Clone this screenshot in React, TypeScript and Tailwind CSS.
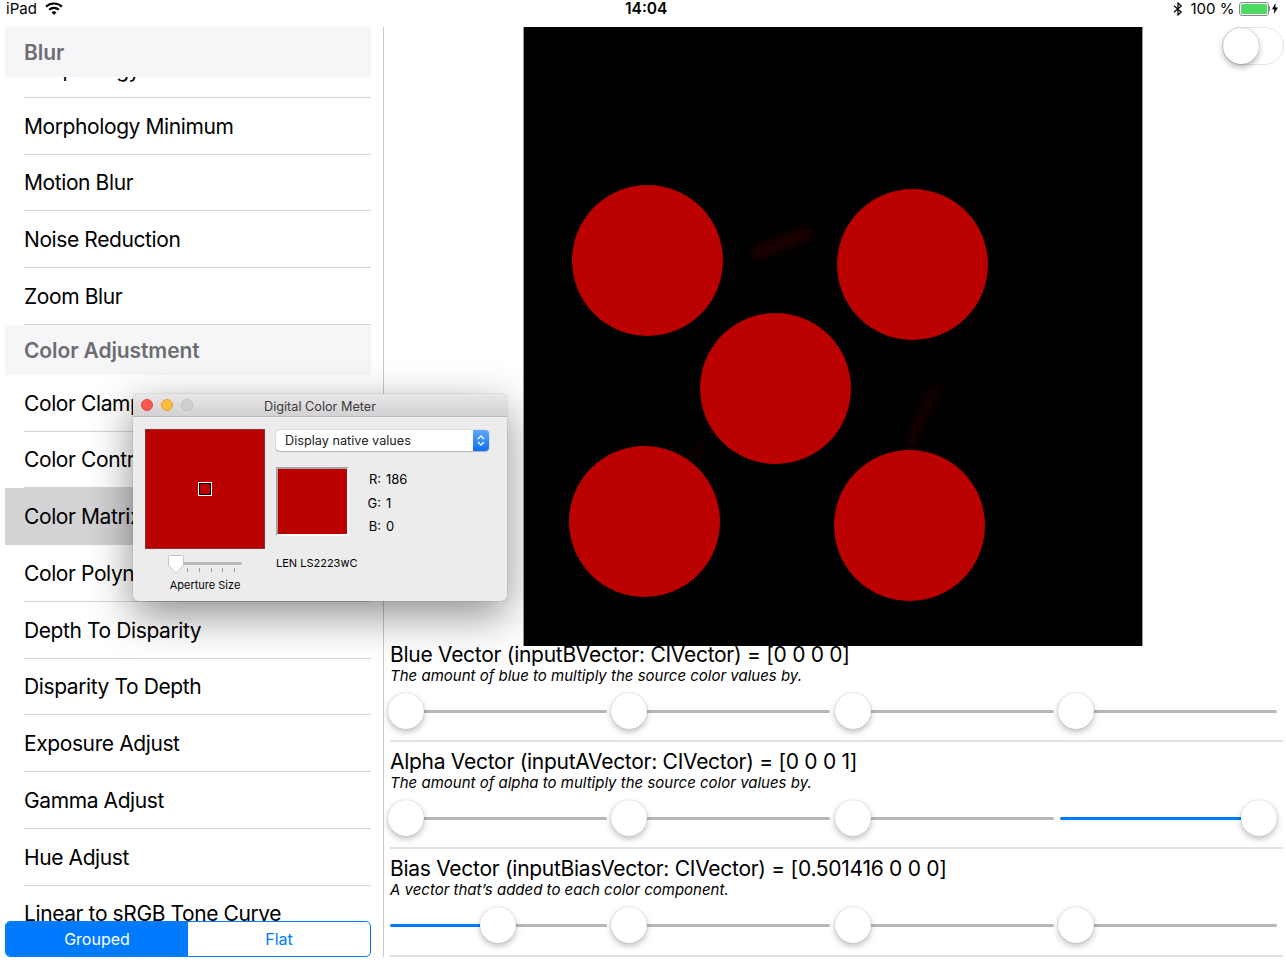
const font = "font-['Inter','Liberation_Sans',sans-serif]";

function Wifi() {
  return (
    <svg width="18" height="13" viewBox="0 0 18 13" className="fill-black">
      <path d="M9 .4c3.400 0 6.400 1.300 8.700 3.400l-1.500 1.700A10 10 0 0 0 9 2.600 10 10 0 0 0 1.800 5.500L.3 3.800A12.700 12.700 0 0 1 9 .4z" />
      <path d="M9 4.700c2.200 0 4.100.8 5.600 2.200l-1.600 1.700A5.900 5.900 0 0 0 9 7a5.900 5.900 0 0 0-4 1.600L3.400 6.900A8.100 8.100 0 0 1 9 4.700z" />
      <path d="M9 9.300c.9 0 1.800.4 2.400.9L9 12.900l-2.400-2.700c.6-.5 1.500-.9 2.400-.9z" />
    </svg>
  );
}

function StatusBar() {
  return (
    <div className="h-[27px] shrink-0 relative flex items-start justify-between px-[6px] text-[15px] leading-[17px] text-black">
      <div className="flex items-center gap-[8px]">
        <span>iPad</span>
        <Wifi />
      </div>
      <span className="absolute left-[625px] top-0 font-semibold text-[15.5px]">14:04</span>
      <div className="flex items-center pr-[2px]">
        <svg width="10" height="14" viewBox="0 0 10 14" fill="none" stroke="black" strokeWidth="1.2" className="mr-[8px]">
          <path d="M1 3.800 8.200 10 5 13V1l3.200 3L1 10.200" />
        </svg>
        <span>100 %</span>
        <div className="ml-[4px] w-[30px] h-[14px] border border-[#888] rounded-[3px] p-[1px]">
          <div className="w-full h-full bg-[#4cd964] rounded-[1.5px]" />
        </div>
        <div className="w-[1.5px] h-[5px] bg-[#888] mr-[2px]" />
        <svg width="6" height="11" viewBox="0 0 6 11" className="fill-black">
          <path d="M3.600 0 0 6.200h2.300L1.800 11 6 4.400H3.400z" />
        </svg>
      </div>
    </div>
  );
}

function Row({ label, selected }: { label: string; selected?: boolean }) {
  return (
    <div className={`h-[56.75px] flex flex-col ${selected ? "bg-[#d3d3d5]" : ""}`}>
      <div className="flex-1 pl-[19px] pt-[1px] flex items-center text-[21px] text-black leading-none whitespace-nowrap tracking-[-0.4px]">{label}</div>
      <div className={`ml-[19px] h-px ${selected ? "bg-transparent" : "bg-[#d4d4d6]"}`} />
    </div>
  );
}

function Header({ label }: { label: string }) {
  return (
    <div className="h-[50px] bg-[#f6f6f8] pl-[19px] pt-[2px] flex items-center text-[21px] font-semibold text-[#6d6d72] tracking-[-0.1px]">{label}</div>
  );
}

function Sidebar() {
  return (
    <div className="w-[384px] shrink-0 h-full border-r border-[#c8c8cc] relative overflow-hidden">
      <div className="absolute inset-x-0 top-0 pl-[5px] pr-[12px]">
        <div className="mt-[14px]">
          <Row label="Morphology Gradient" />
          <Row label="Morphology Minimum" />
          <Row label="Motion Blur" />
          <Row label="Noise Reduction" />
          <Row label="Zoom Blur" />
          <Header label="Color Adjustment" />
          <Row label="Color Clamp" />
          <Row label="Color Controls" />
          <Row label="Color Matrix" selected />
          <Row label="Color Polynomial" />
          <Row label="Depth To Disparity" />
          <Row label="Disparity To Depth" />
          <Row label="Exposure Adjust" />
          <Row label="Gamma Adjust" />
          <Row label="Hue Adjust" />
          <Row label="Linear to sRGB Tone Curve" />
        </div>
      </div>
      <div className="absolute left-[5px] right-[12px] top-0">
        <Header label="Blur" />
      </div>
      <div className="absolute left-[5px] right-[12px] top-[894px] h-[36px] flex rounded-[5px] border border-[#007aff] bg-white text-[16px] overflow-hidden">
        <div className="w-[182px] bg-[#007aff] text-white flex items-center justify-center">Grouped</div>
        <div className="flex-1 text-[#007aff] flex items-center justify-center">Flat</div>
      </div>
    </div>
  );
}

function Slider({ value }: { value: number }) {
  const thumb = 16 + value * 183;
  return (
    <div className="relative w-[217px] h-[36px] flex items-center">
      <div className="w-full h-[3px] flex rounded-full overflow-hidden">
        <div className="bg-[#007aff]" style={{ width: thumb }} />
        <div className="flex-1 bg-[#b6b6b6]" />
      </div>
      <div
        className="absolute top-0 w-[36px] h-[36px] -ml-[18px] rounded-full bg-white shadow-[0_3px_6px_rgba(0,0,0,0.25),0_0_1px_rgba(0,0,0,0.3)]"
        style={{ left: thumb }}
      />
    </div>
  );
}

function Param({ title, desc, values }: { title: string; desc: string; values: number[] }) {
  return (
    <div className="h-[97.2px] mb-[10px] flex flex-col">
      <div className="text-[21px] leading-[20px] text-black whitespace-nowrap tracking-[-0.28px]">{title}</div>
      <div className="text-[15px] leading-[19px] italic text-black whitespace-nowrap mt-[0.5px]">{desc}</div>
      <div className="flex gap-[6.3px] mt-[8.5px]">
        {values.map((v, i) => (
          <Slider key={i} value={v} />
        ))}
      </div>
      <div className="mt-auto h-[2px] bg-[#e2e2e4]" />
    </div>
  );
}

function Circle({ className }: { className: string }) {
  return <div className={`absolute w-[151px] h-[151px] rounded-full bg-[#ba0100] ${className}`} />;
}

function Preview() {
  return (
    <div className="relative w-[620px] h-[619px] bg-black border-x border-[#9a9a9a] ml-[139px] shrink-0 overflow-hidden">
      <div className="absolute left-[226px] top-[211px] w-[64px] h-[10px] -rotate-[22deg] rounded-full bg-[#260200] blur-[5px]" />
      <div className="absolute left-[366px] top-[385px] w-[66px] h-[6px] -rotate-[65deg] rounded-full bg-[#240200] blur-[4px]" />
      <div className="absolute left-[156px] top-[425px] w-[30px] h-[4px] -rotate-[45deg] rounded-full bg-[#180100] blur-[3px]" />
      <Circle className="left-[48px] top-[158px]" />
      <Circle className="left-[313px] top-[162px]" />
      <Circle className="left-[176px] top-[286px]" />
      <Circle className="left-[45px] top-[419px]" />
      <Circle className="left-[310px] top-[423px]" />
    </div>
  );
}

function ColorMeter() {
  return (
    <div className="absolute left-[133px] top-[394px] w-[374px] h-[207px] rounded-[5px] bg-[#ececec] overflow-hidden shadow-[0_14px_44px_rgba(0,0,0,0.45),0_0_1px_rgba(0,0,0,0.5)]">
      <div className="h-[23px] bg-gradient-to-b from-[#e8e6e8] to-[#d3d1d3] border-b border-[#b9b9b9] relative flex items-center justify-center text-[12.7px] text-[#3c3c3c] pt-[4px]">
        <div className="absolute left-[8px] top-[5px] flex gap-[8px]">
          <div className="w-[12px] h-[12px] rounded-full bg-[#fc5753] border border-[#df4744]" />
          <div className="w-[12px] h-[12px] rounded-full bg-[#fdbc40] border border-[#de9f34]" />
          <div className="w-[12px] h-[12px] rounded-full bg-[#d0d0d0] border border-[#c0c0c0]" />
        </div>
        Digital Color Meter
      </div>
      <div className="flex pl-[12px] pt-[12px]">
        <div className="w-[120px] shrink-0 flex flex-col items-center">
          <div className="w-[120px] h-[120px] bg-[#ba0100] border border-[#8c3232] flex items-center justify-center">
            <div className="w-[12px] h-[12px] border-[1.5px] border-black outline outline-1 outline-white" />
          </div>
          <div className="relative w-[74px] h-[20px] mt-[6px]">
            <div className="absolute left-0 right-0 top-[7px] h-[3px] rounded-full bg-[#b9b9b9]" />
            <svg width="16" height="19" viewBox="0 0 16 19" className="absolute left-0 top-0">
              <path d="M2.500.5h11a2 2 0 0 1 2 2v8L8 18 .5 10.500v-8a2 2 0 0 1 2-2z" fill="white" stroke="#c4c4c4" />
            </svg>
            <div className="absolute left-[19px] right-[7px] top-[13px] flex justify-between">
              {[0, 1, 2, 3, 4].map((i) => (
                <div key={i} className="w-px h-[4px] bg-[#9a9a9a]" />
              ))}
            </div>
          </div>
          <div className="text-[11px] leading-[13px] text-black mt-[4px] whitespace-nowrap">Aperture Size</div>
        </div>
        <div className="ml-[11px] flex-1 mt-[1px]">
          <div className="w-[213px] h-[21px] flex rounded-[4px] bg-white shadow-[0_0_1px_rgba(0,0,0,0.5),0_1px_1px_rgba(0,0,0,0.2)] overflow-hidden text-[12.7px] text-[#222]">
            <div className="flex-1 pl-[9px] flex items-center">Display native values</div>
            <div className="w-[16px] bg-gradient-to-b from-[#5aa9fb] to-[#0f6cf3] flex items-center justify-center">
              <svg width="8" height="13" viewBox="0 0 8 13" fill="none" stroke="white" strokeWidth="1.3">
                <path d="M1 5 4 2l3 3M1 8l3 3 3-3" />
              </svg>
            </div>
          </div>
          <div className="flex mt-[16px]">
            <div className="w-[73px] h-[69px] bg-[#ba0100] border-2 border-t-[#a5a5a5] border-l-[#a5a5a5] border-r-white border-b-white" />
            <div className="ml-[18px] pt-[1px] text-[13px] text-black grid grid-cols-[19px_auto] leading-[23.5px]">
              <span className="text-right pr-[5px]">R:</span><span>186</span>
              <span className="text-right pr-[5px]">G:</span><span>1</span>
              <span className="text-right pr-[5px]">B:</span><span>0</span>
            </div>
          </div>
          <div className="text-[11px] leading-[13px] mt-[18px] text-black">LEN LS2223wC</div>
        </div>
      </div>
    </div>
  );
}

function Main() {
  return (
    <div className="flex-1 min-w-0 h-full relative overflow-hidden">
      <Preview />
      <div className="absolute right-[2px] top-0 w-[62px] h-[38px] rounded-full border border-[#e5e5e5] bg-white">
        <div className="w-[36px] h-[36px] rounded-full bg-white shadow-[0_3px_6px_rgba(0,0,0,0.3),0_0_1px_rgba(0,0,0,0.35)]" />
      </div>
      <div className="pl-[6px] pr-[3px] -mt-[1px]">
        <Param title="Blue Vector (inputBVector: CIVector) = [0 0 0 0]" desc="The amount of blue to multiply the source color values by." values={[0, 0, 0, 0]} />
        <Param title="Alpha Vector (inputAVector: CIVector) = [0 0 0 1]" desc="The amount of alpha to multiply the source color values by." values={[0, 0, 0, 1]} />
        <Param title="Bias Vector (inputBiasVector: CIVector) = [0.501416 0 0 0]" desc="A vector that’s added to each color component." values={[0.5, 0, 0, 0]} />
      </div>
    </div>
  );
}

export default function App() {
  return (
    <div className={`w-[1286px] h-[962px] bg-white relative overflow-hidden flex flex-col ${font}`}>
      <StatusBar />
      <div className="h-[930px] shrink-0 flex">
        <Sidebar />
        <Main />
      </div>
      <ColorMeter />
    </div>
  );
}
